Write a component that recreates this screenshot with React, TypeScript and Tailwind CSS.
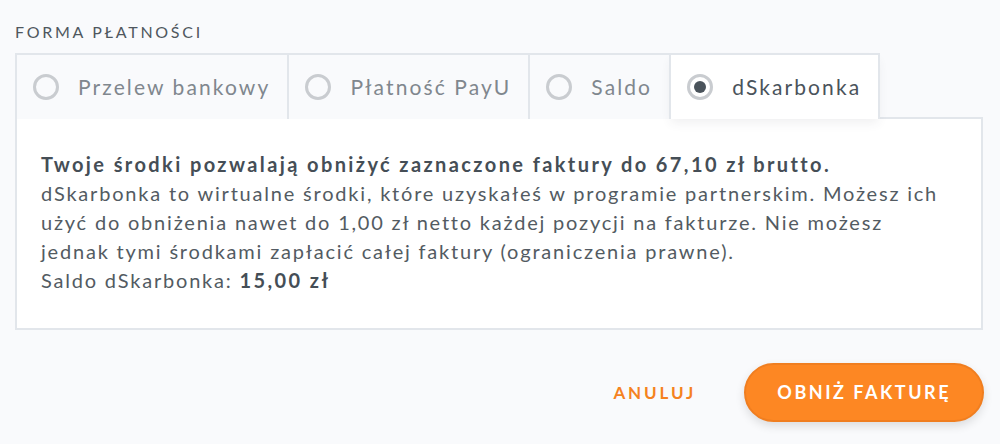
import { useState } from "react"

const methods = [
  { id: "transfer", label: "Przelew bankowy" },
  { id: "payu", label: "Płatność PayU" },
  { id: "balance", label: "Saldo" },
  { id: "piggy", label: "dSkarbonka" },
]

function Radio({ checked }: { checked: boolean }) {
  return (
    <span className="flex size-[26px] shrink-0 items-center justify-center rounded-full border-[3px] border-[#c9ccd0]">
      {checked ? <span className="size-[12px] rounded-full bg-[#4a535b]" /> : null}
    </span>
  )
}

export default function App() {
  const [selected, setSelected] = useState("piggy")

  return (
    <div className="min-h-screen bg-[#f9fafc] px-[15px] pt-[22px] font-['Lato','Open_Sans',sans-serif] text-[#4a535b]">
      <p className="text-[16px] uppercase leading-[20px] tracking-[0.17em] text-[#4f575e]">Forma płatności</p>

      <div className="mt-[11px] flex">
        {methods.map((method, index) => {
          const active = method.id === selected
          return (
            <button
              key={method.id}
              type="button"
              onClick={() => setSelected(method.id)}
              className={
                "relative z-10 -mb-[2px] flex h-[66px] items-center gap-[19px] border-t-2 border-l-2 border-[#e2e6eb] pl-[16px] pr-[17px] text-[21px] tracking-[0.1em] " +
                (index === methods.length - 1 ? "border-r-2 " : "") +
                (active
                  ? "bg-white text-[#4a535b] shadow-[0_6px_10px_-2px_rgba(60,70,80,0.08)]"
                  : "bg-[#f9fafc] text-[#80878e]")
              }
            >
              <Radio checked={active} />
              {method.label}
            </button>
          )
        })}
      </div>

      <div className="h-[213px] w-[968px] border-2 border-[#e2e6eb] bg-white px-[24px] pt-[31px] text-[20px] leading-[29px] tracking-[0.09em] text-[#535b62]">
        <p className="font-bold tracking-[0.12em] text-[#454e56]">
          Twoje środki pozwalają obniżyć zaznaczone faktury do 67,10 zł brutto.
        </p>
        <p>
          dSkarbonka to wirtualne środki, które uzyskałeś w programie partnerskim. Możesz ich użyć do obniżenia nawet do
          1,00 zł netto każdej pozycji na fakturze. Nie możesz jednak tymi środkami zapłacić całej faktury (ograniczenia
          prawne).
        </p>
        <p>
          Saldo dSkarbonka: <span className="font-bold tracking-[0.12em] text-[#454e56]">15,00 zł</span>
        </p>
      </div>

      <div className="mt-[33px] flex w-[969px] items-center justify-end gap-[48px]">
        <button type="button" className="text-[17px] font-bold uppercase tracking-[0.17em] text-[#f5821f]">
          Anuluj
        </button>
        <button
          type="button"
          className="h-[59px] rounded-full border-2 border-[#f07e20] bg-[#fd8723] px-[31px] text-[18px] font-bold uppercase tracking-[0.14em] text-white shadow-[0_4px_10px_rgba(0,0,0,0.12)]"
        >
          Obniż fakturę
        </button>
      </div>
    </div>
  )
}
